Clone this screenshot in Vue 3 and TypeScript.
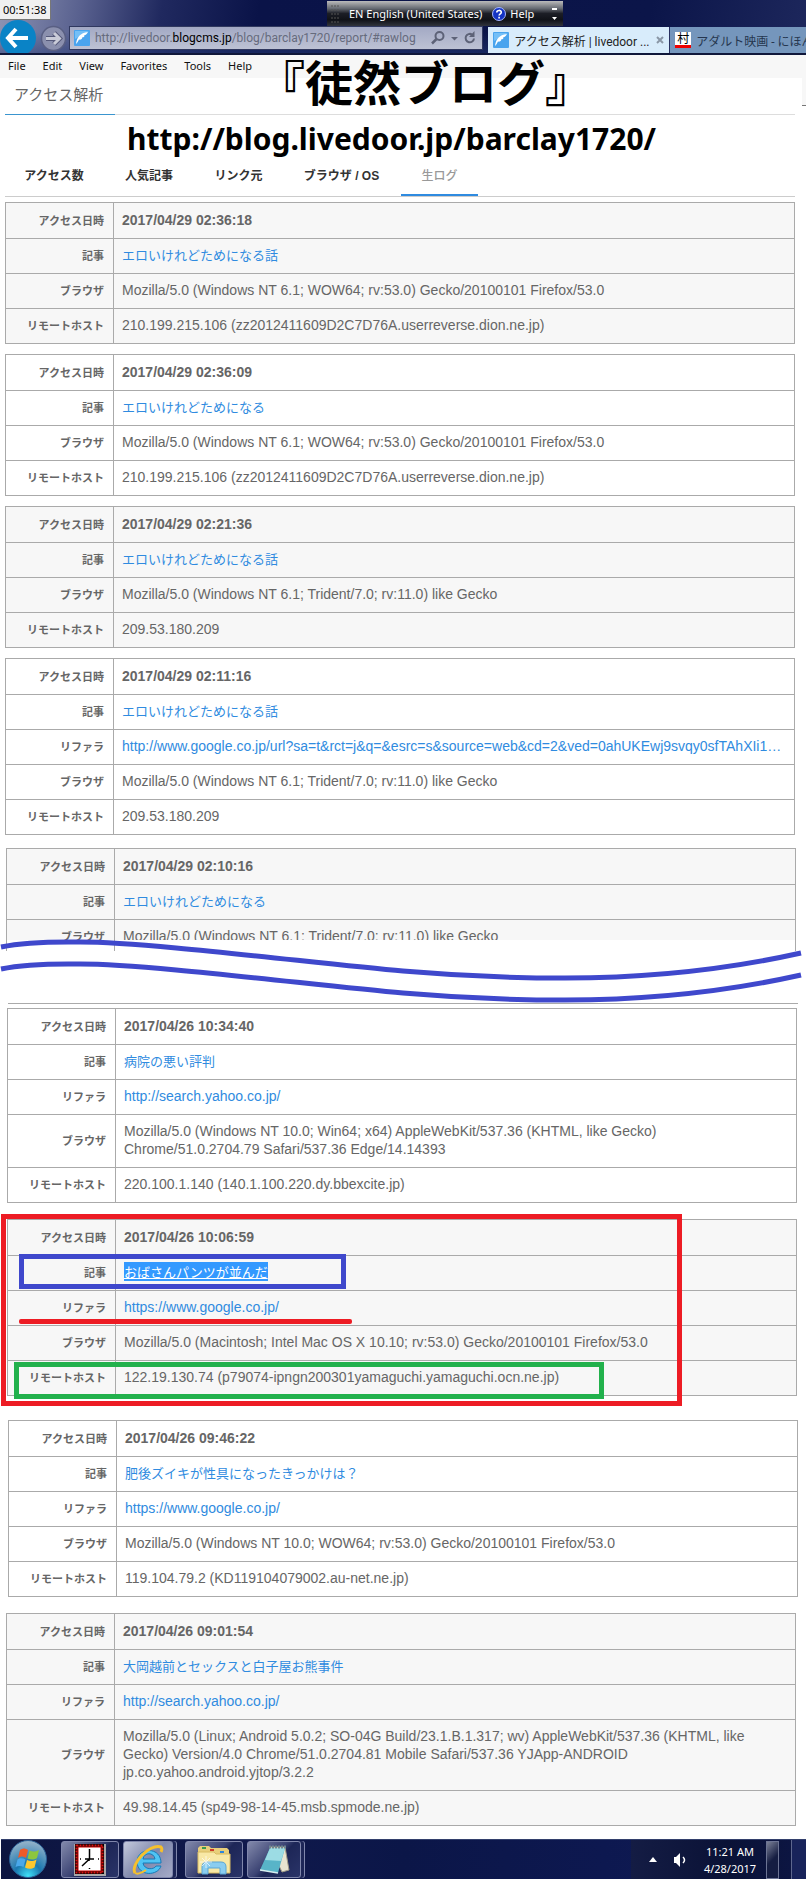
<script setup lang="ts">
interface Row {
  label: string
  value: string
  kind: 'date' | 'entry' | 'link' | 'text'
}
interface Entry {
  rows: Row[]
  shaded: boolean
}

function entry(shaded: boolean, date: string, title: string, referrer: string, browser: string, host: string): Entry {
  const rows: Row[] = [
    { label: 'アクセス日時', value: date, kind: 'date' },
    { label: '記事', value: title, kind: 'entry' },
  ]
  if (referrer) rows.push({ label: 'リファラ', value: referrer, kind: 'link' })
  rows.push({ label: 'ブラウザ', value: browser, kind: 'text' })
  if (host) rows.push({ label: 'リモートホスト', value: host, kind: 'text' })
  return { rows, shaded }
}

const firefox = 'Mozilla/5.0 (Windows NT 6.1; WOW64; rv:53.0) Gecko/20100101 Firefox/53.0'
const trident = 'Mozilla/5.0 (Windows NT 6.1; Trident/7.0; rv:11.0) like Gecko'

interface Block {
  place: string
  entry: Entry
}

const blocks: Block[] = [
  { place: 'p5', entry: entry(true, '2017/04/29 02:36:18', 'エロいけれどためになる話', '', firefox, '210.199.215.106 (zz2012411609D2C7D76A.userreverse.dion.ne.jp)') },
  { place: 'p5', entry: entry(false, '2017/04/29 02:36:09', 'エロいけれどためになる', '', firefox, '210.199.215.106 (zz2012411609D2C7D76A.userreverse.dion.ne.jp)') },
  { place: 'p5', entry: entry(true, '2017/04/29 02:21:36', 'エロいけれどためになる話', '', trident, '209.53.180.209') },
  { place: 'p5', entry: entry(false, '2017/04/29 02:11:16', 'エロいけれどためになる話', 'http://www.google.co.jp/url?sa=t&rct=j&q=&esrc=s&source=web&cd=2&ved=0ahUKEwj9svqy0sfTAhXIi1…', trident, '209.53.180.209') },
  { place: 'p6 torn', entry: entry(true, '2017/04/29 02:10:16', 'エロいけれどためになる', '', trident, '') },
  { place: 'p7', entry: entry(false, '2017/04/26 10:34:40', '病院の悪い評判', 'http://search.yahoo.co.jp/', 'Mozilla/5.0 (Windows NT 10.0; Win64; x64) AppleWebKit/537.36 (KHTML, like Gecko) Chrome/51.0.2704.79 Safari/537.36 Edge/14.14393', '220.100.1.140 (140.1.100.220.dy.bbexcite.jp)') },
  { place: 'p7 marked', entry: entry(true, '2017/04/26 10:06:59', 'おばさんパンツが並んだ', 'https://www.google.co.jp/', 'Mozilla/5.0 (Macintosh; Intel Mac OS X 10.10; rv:53.0) Gecko/20100101 Firefox/53.0', '122.19.130.74 (p79074-ipngn200301yamaguchi.yamaguchi.ocn.ne.jp)') },
  { place: 'p8', entry: entry(false, '2017/04/26 09:46:22', '肥後ズイキが性具になったきっかけは？', 'https://www.google.co.jp/', 'Mozilla/5.0 (Windows NT 10.0; WOW64; rv:53.0) Gecko/20100101 Firefox/53.0', '119.104.79.2 (KD119104079002.au-net.ne.jp)') },
  { place: 'p6 last', entry: entry(true, '2017/04/26 09:01:54', '大岡越前とセックスと白子屋お熊事件', 'http://search.yahoo.co.jp/', 'Mozilla/5.0 (Linux; Android 5.0.2; SO-04G Build/23.1.B.1.317; wv) AppleWebKit/537.36 (KHTML, like Gecko) Version/4.0 Chrome/51.0.2704.81 Mobile Safari/537.36 YJApp-ANDROID jp.co.yahoo.android.yjtop/3.2.2', '49.98.14.45 (sp49-98-14-45.msb.spmode.ne.jp)') },
]

const menu = ['File', 'Edit', 'View', 'Favorites', 'Tools', 'Help']
const tabs = ['アクセス数', '人気記事', 'リンク元', 'ブラウザ / OS', '生ログ']
</script>

<template>
  <div class="page">
    <header class="frame">
      <div class="timer">00:51:38</div>
      <div class="langbar">
        <svg class="grip" width="8" height="18" viewBox="0 0 8 18">
          <path d="M0 1H8M0 5H8M0 9H8M0 13H8M0 17H8" stroke="#555" stroke-dasharray="2 1" />
        </svg>
        <span>EN English (United States)</span>
        <button class="plain help" type="button">
          <svg width="14" height="14" viewBox="0 0 14 14">
            <circle cx="7" cy="7" r="6.5" fill="#1433c4" stroke="#a8b8ff" />
            <path d="M4.8 5.4C4.8 2.8 9.3 2.8 9.3 5.2C9.3 6.8 7.1 6.8 7.1 8.6M7.1 9.8V11.4" stroke="#fff" stroke-width="1.6" fill="none" />
          </svg>
          Help
        </button>
        <svg class="mini" width="6" height="14" viewBox="0 0 6 14">
          <path d="M0 1H5V3H0ZM0 10H5L2.500 13Z" fill="#fff" />
        </svg>
      </div>
      <nav class="bar">
        <button class="plain back" type="button" aria-label="Back">
          <svg width="36" height="33" viewBox="0 0 36 33">
            <circle cx="18" cy="18" r="18" fill="#0a83c6" />
            <path d="M16 9L8 18L16 27M9 18H28" stroke="#fff" stroke-width="4" fill="none" />
          </svg>
        </button>
        <button class="plain forward" type="button" aria-label="Forward">
          <svg width="27" height="27" viewBox="0 0 27 27">
            <circle cx="13.500" cy="13.500" r="12" fill="#8b90ae" stroke="#595f83" stroke-width="1.500" />
            <path d="M14 8L19.500 13.500L14 19M19 13.500H6" stroke="#55597a" stroke-width="5" fill="none" />
            <path d="M14 8L19.500 13.500L14 19M19 13.500H6" stroke="#c9cbd8" stroke-width="3" fill="none" />
          </svg>
        </button>
        <div class="address">
          <svg width="16" height="16" viewBox="0 0 16 16">
            <rect width="16" height="16" rx="1" fill="#4aa4ee" />
            <path d="M1 1H15L1 9Z" fill="#74bff7" />
            <path d="M2 14C3 7 6 3 14 2C13 4 12 5 10 5.500C11 6 10 7.500 8 7.500C9 9 6 10 5 9.500C4 11 3.500 13 2 14Z" fill="#fff" />
          </svg>
          <div class="url" role="textbox" contenteditable="true" aria-label="Address" spellcheck="false">http://livedoor.<b>blogcms.jp</b>/blog/barclay1720/report/#rawlog</div>
          <button class="plain tool" type="button" aria-label="Search">
            <svg width="28" height="14" viewBox="0 0 28 14">
              <circle cx="8.500" cy="5" r="4" fill="none" stroke="#5d6277" stroke-width="2" />
              <path d="M5.500 8L1 12.500" stroke="#5d6277" stroke-width="2.500" />
              <path d="M20 6H27L23.500 9.500Z" fill="#5d6277" />
            </svg>
          </button>
          <button class="plain tool" type="button" aria-label="Refresh">
            <svg width="12" height="14" viewBox="0 0 12 14">
              <path d="M8 3.500A4.200 4.200 0 1 0 10 7.500" fill="none" stroke="#5d6277" stroke-width="2" />
              <path d="M10.500 0V6H5Z" fill="#5d6277" />
            </svg>
          </button>
        </div>
        <div class="tab on">
          <svg width="16" height="16" viewBox="0 0 16 16">
            <rect width="16" height="16" rx="1" fill="#4aa4ee" />
            <path d="M1 1H15L1 9Z" fill="#74bff7" />
            <path d="M2 14C3 7 6 3 14 2C13 4 12 5 10 5.500C11 6 10 7.500 8 7.500C9 9 6 10 5 9.500C4 11 3.500 13 2 14Z" fill="#fff" />
          </svg>
          <span class="name">アクセス解析 | livedoor ...</span>
          <button class="plain close" type="button" aria-label="Close tab">
            <svg width="8" height="8" viewBox="0 0 8 8"><path d="M1 1L7 7M7 1L1 7" stroke="#8a97a6" stroke-width="2" /></svg>
          </button>
        </div>
        <div class="tab off">
          <span class="mura">村</span>
          <span class="name">アダルト映画 - にほん</span>
        </div>
      </nav>
    </header>

    <nav class="menu">
      <button v-for="m in menu" :key="m" class="plain" type="button">{{ m }}</button>
    </nav>
    <div class="corner"></div>
    <h1 class="banner">『徒然ブログ』</h1>

    <main>
      <h2 class="heading"><span>アクセス解析</span></h2>
      <p class="blog">http://blog.livedoor.jp/barclay1720/</p>
      <nav class="tabs">
        <a v-for="(t, i) in tabs" :key="t" href="#" :class="{ active: i === 4 }">{{ t }}</a>
      </nav>

      <section v-for="(b, i) in blocks" :key="i" class="block" :class="b.place">
        <div class="clip">
          <table :class="{ shaded: b.entry.shaded }">
            <tbody>
              <tr v-for="r in b.entry.rows" :key="r.label">
                <th scope="row">{{ r.label }}</th>
                <td :class="r.kind">
                  <a v-if="r.kind === 'entry' || r.kind === 'link'" href="#">{{ r.value }}</a>
                  <template v-else>{{ r.value }}</template>
                </td>
              </tr>
            </tbody>
          </table>
        </div>
        <template v-if="i === 4">
          <div class="stub"><i></i></div>
          <svg class="waves" viewBox="0 0 806 60" preserveAspectRatio="none">
            <g fill="none" stroke="#3f48cc" stroke-width="5">
              <path d="M1 9C30 3 60 4 80 4C150 4 320 26 403 33C460 38 510 40 565 40C640 40 720 33 801 15" />
              <path d="M1 31C30 25 60 26 80 26C150 26 320 48 403 55C460 60 510 62 565 62C640 62 720 55 801 37" />
            </g>
          </svg>
          <hr />
        </template>
        <template v-if="i === 6">
          <div class="mark outer"></div>
          <div class="mark title"></div>
          <div class="mark line"></div>
          <div class="mark host"></div>
        </template>
      </section>
    </main>

    <footer class="taskbar">
      <button class="plain orb" type="button" aria-label="Start">
        <svg width="40" height="40" viewBox="0 0 40 40">
          <defs>
            <radialGradient id="orb" cx=".5" cy=".95" r=".9">
              <stop offset="0" stop-color="#3fe0f8" />
              <stop offset=".4" stop-color="#1a78b0" />
              <stop offset="1" stop-color="#8fb0c8" />
            </radialGradient>
          </defs>
          <circle cx="20" cy="20" r="18.500" fill="url(#orb)" stroke="#2a5f96" />
          <path d="M12 11C15 9 17 9 20 11L18 19C15 17 13 17 10 19Z" fill="#ef5a28" />
          <path d="M21.500 11.500C25 13 27 13 31 11L29 19C26 21 23 21 19.500 19.500Z" fill="#8cc63e" />
          <path d="M9.500 20.500C12 18.500 15 19 17.500 20.500L15.500 28C13 26.500 10 26.500 7.500 28Z" fill="#4aa8ea" />
          <path d="M19 21C22 22.500 25 22.500 28.500 20.500L26.500 28.500C23 30.500 20 30 17 28.500Z" fill="#fdc72e" />
        </svg>
      </button>
      <button class="task wide" type="button" aria-label="Clock">
        <svg width="32" height="32" viewBox="0 0 32 32">
          <rect width="32" height="32" fill="#a8a8a8" />
          <rect x="1" y="0" width="29" height="30" fill="#000" />
          <rect x="2.500" y="1.500" width="26" height="27" fill="none" stroke="#e01010" stroke-width="2" stroke-dasharray="2 1" />
          <rect x="4" y="3" width="23" height="24" fill="#fff" stroke="#c00" />
          <path d="M15.500 5V15L8 22M11 15H20M15 15V17M15.500 24V25M6 15H7M24 15H25" stroke="#000" stroke-width="1.500" fill="none" />
        </svg>
      </button>
      <button class="task lit stack" type="button" aria-label="Internet Explorer">
        <svg width="32" height="32" viewBox="0 0 32 32">
          <path d="M29 19H11C12 26 22 26 24 22H29C26 32 6 33 5 18C5 3 29 2 29 19ZM11 15H23C22 8 12 8 11 15Z" fill="#4fc3f3" stroke="#167ab8" />
          <path d="M3 29C-2 21 17 -1 29 3C30 4 30 6 29 8" fill="none" stroke="#f6c02c" stroke-width="3" />
          <path d="M3 29C6 31 11 28 14 26" fill="none" stroke="#f6c02c" stroke-width="2" />
        </svg>
      </button>
      <button class="task wide" type="button" aria-label="Explorer">
        <svg width="34" height="32" viewBox="0 0 34 32">
          <path d="M1 4L3 2H12L14 4H30L32 6V29H1Z" fill="#e8cf7c" />
          <path d="M1 8H17L19 10H33V29H1Z" fill="#f8e8a6" stroke="#d8bb62" />
          <path d="M5 3H9V5H5Z" fill="#3a9a4e" />
          <path d="M13 5H17V7H13Z" fill="#d03c28" />
          <path d="M23 7H27V9H23Z" fill="#2d86dc" />
          <path d="M5 30V23Q5 18 10 18H24Q29 18 29 23V30H23V24H11V30Z" fill="#8acdf0" stroke="#5aa5d4" />
          <path d="M9 12V24M3 18H15M5 14L13 22M13 14L5 22" stroke="#fff" opacity=".7" />
        </svg>
      </button>
      <button class="task stack narrow" type="button" aria-label="Notepad">
        <svg width="32" height="32" viewBox="0 0 32 32">
          <path d="M12 3H27L31 26L24 28Z" fill="#e8e4d0" stroke="#a09c88" />
          <path d="M12 4H27L20 29L2 26Z" fill="#58b4c8" />
          <path d="M12 4H27L23 17L7 16Z" fill="#9cdce4" />
          <path d="M11 3H28" stroke="#6d8590" stroke-width="3" stroke-dasharray="2 1" />
          <path d="M2 26L20 29" stroke="#d6eef0" stroke-width="1.500" />
        </svg>
      </button>
      <div class="tray">
        <svg width="8" height="5" viewBox="0 0 8 5"><path d="M0 5L4 0L8 5Z" fill="#fff" /></svg>
        <svg width="14" height="16" viewBox="0 0 14 16">
          <path d="M1 5H3L7 1V15L3 11H1Z" fill="#fff" />
          <path d="M10 5Q13 8 10 11" fill="none" stroke="#fff" stroke-width="1.500" />
        </svg>
        <div class="clock">11:21 AM<br />4/28/2017</div>
        <button class="plain desk" type="button" aria-label="Show desktop"></button>
      </div>
    </footer>
  </div>
</template>

<style>
body {
  margin: 0;
  background: #fff;
}
</style>

<style scoped>
.page {
  position: relative;
  overflow: hidden;
  font-family: "Liberation Sans", "Noto Sans CJK JP", sans-serif;
  color: #666;
}
.page * {
  box-sizing: border-box;
}
.plain {
  border: 0;
  padding: 0;
  margin: 0;
  background: none;
  font: inherit;
  color: inherit;
}
svg {
  display: block;
  flex: none;
}
.frame {
  position: relative;
  height: 55px;
  padding-top: 20px;
  background: linear-gradient(180deg, transparent 60%, rgba(40, 60, 120, 0.5)), linear-gradient(100deg, #8d94b4 0, #59618f 10%, #20295f 20%, #0a1348 32%, #0b1549 80%, #1d275c 100%);
  border-bottom: 2px solid #10173a;
  font-family: "Noto Sans", "Noto Sans CJK JP", sans-serif;
  overflow: hidden;
}
.timer {
  position: absolute;
  left: 0;
  top: 0;
  width: 51px;
  height: 20px;
  background: #f0f0f0;
  border: solid #777;
  border-width: 0 1px 1px 0;
  color: #000;
  font-size: 11px;
  line-height: 19px;
  padding-left: 3px;
}
.langbar {
  position: absolute;
  left: 327px;
  top: 1px;
  width: 236px;
  height: 25px;
  display: flex;
  align-items: center;
  padding: 0 5px 0 4px;
  gap: 10px;
  background: linear-gradient(180deg, #bbb 0, #666a72 30%, #1c1e26 50%, #101218 75%, #30333c);
  color: #fff;
  font-size: 11px;
  white-space: nowrap;
}
.help {
  display: flex;
  align-items: center;
  gap: 4px;
}
.mini {
  margin-left: auto;
}
.bar {
  display: flex;
  align-items: flex-start;
  height: 33px;
}
.back {
  width: 36px;
}
.forward {
  margin: 5px 2px 0 4px;
}
.address {
  flex: 400 1 0;
  min-width: 0;
  margin-top: 6px;
  height: 24px;
  display: flex;
  align-items: center;
  padding: 0 6px 0 4px;
  border: 1px solid #30385f;
  background: linear-gradient(180deg, #a3a9c4, #bdc2d4);
  color: #666b7d;
}
.url {
  flex: 1;
  min-width: 0;
  margin-left: 5px;
  overflow: hidden;
  white-space: nowrap;
  font: 400 12px/20px Roboto, sans-serif;
}
.url b {
  font-weight: 400;
  color: #000;
}
.tool + .tool {
  margin-left: 5px;
}
.tab {
  display: flex;
  align-items: center;
  gap: 5px;
  height: 26px;
  margin-top: 7px;
  padding: 0 5px;
  font-family: Roboto, "Noto Sans CJK JP", sans-serif;
  font-size: 12px;
  white-space: nowrap;
  overflow: hidden;
}
.on {
  flex: 170 1 0;
  margin-left: 5px;
  background: #d8ecfb;
  color: #222;
}
.close {
  margin-left: auto;
}
.off {
  flex: 130 1 0;
  padding-right: 0;
  border-left: 1px solid #283060;
  background: #7596bc;
  color: #26364f;
}
.mura {
  width: 16px;
  height: 16px;
  flex: none;
  background: linear-gradient(#fff 13px, #e00 13px);
  color: #000;
  font-size: 12px;
  line-height: 14px;
  text-align: center;
}
.menu {
  display: flex;
  gap: 17px;
  height: 23px;
  padding: 0 8px;
  background: #f7f7f7;
  color: #111;
  font-family: "Noto Sans", sans-serif;
  font-size: 11px;
  line-height: 22px;
}
.menu button {
  height: 21px;
}
.corner {
  position: absolute;
  right: 0;
  top: 78px;
  width: 4px;
  height: 28px;
  background: #f7f7f7;
  border-bottom: 1px solid #777;
}
.banner {
  position: absolute;
  left: 257px;
  top: 50px;
  margin: 0;
  color: #000;
  font: 700 48px/60px "Noto Sans CJK JP", sans-serif;
  white-space: nowrap;
}
.heading {
  display: flex;
  margin: 0 11px 0 5px;
  font: 400 15px/36px "Noto Sans CJK JP", sans-serif;
  box-shadow: inset 0 -1px #ddd;
}
.heading span {
  width: 110px;
  height: 37px;
  padding-left: 9px;
  line-height: 31px;
  border-bottom: 1px solid #3a95cf;
}
.blog {
  margin: 0;
  padding: 4px 0 0 127px;
  height: 41px;
  color: #000;
  font: 700 30px/40px "Noto Sans", sans-serif;
  white-space: nowrap;
}
.tabs {
  display: grid;
  grid-template-columns: 98px 92px 87px 119px 77px;
  height: 41px;
  margin: 0 11px 5px 5px;
  border-bottom: 1px solid #ccc;
  text-align: center;
  font: 700 12px/40px "Liberation Sans", "Noto Sans CJK JP", sans-serif;
}
.tabs a {
  height: 40px;
  color: #333;
  text-decoration: none;
}
.tabs .active {
  color: #999;
  border-bottom: 2px solid #2f8be0;
  font-weight: 500;
}
.block {
  position: relative;
  margin-bottom: 10px;
}
.clip {
  overflow: hidden;
}
.p5 {
  padding: 0 11px 0 5px;
}
.p6 {
  padding: 0 10px 0 6px;
}
.p7 {
  padding: 0 9px 0 7px;
  margin-bottom: 16px;
}
.p8 {
  padding: 0 8px;
  margin-bottom: 16px;
}
.marked {
  margin-bottom: 24px;
}
.last {
  margin-bottom: 13px;
}
.torn {
  margin: 13px 0 4px;
}
.torn .clip {
  height: 92px;
}
table {
  width: 100%;
  border-collapse: collapse;
  table-layout: fixed;
  font-size: 14px;
  line-height: 18px;
}
.shaded {
  background: #f7f7f7;
}
th,
td {
  border: 1px solid #aaa;
  padding: 7px 9px 9px 8px;
}
tr:first-child > * {
  padding-top: 8px;
}
th {
  width: 108px;
  text-align: right;
  font: 700 11px/18px "Noto Sans CJK JP", sans-serif;
}
td {
  text-align: left;
  overflow: hidden;
}
.date {
  font-weight: 700;
}
.entry {
  font: 400 13px/18px "Noto Sans CJK JP", sans-serif;
}
.link {
  white-space: nowrap;
}
td a {
  color: #2f8be0;
  text-decoration: none;
}
.marked .entry a {
  background: #3399ff;
  color: #fff;
  text-decoration: underline;
}
.stub {
  height: 11px;
  border: solid #aaa;
  border-width: 0 1px;
}
.stub i {
  display: block;
  width: 108px;
  height: 11px;
  border-right: 1px solid #aaa;
}
.waves {
  position: absolute;
  left: 0;
  top: 90px;
  width: 100%;
  height: 60px;
  overflow: visible;
}
hr {
  height: 1px;
  margin: 52px -2px 0 2px;
  border: 0;
  background: #aaa;
}
.mark {
  position: absolute;
  border: 5px solid #ed1c24;
}
.outer {
  left: 1px;
  top: -5px;
  width: 681px;
  height: 192px;
}
.title {
  left: 19px;
  top: 35px;
  width: 327px;
  height: 35px;
  border-color: #3f48cc;
}
.line {
  left: 19px;
  top: 100px;
  width: 333px;
  height: 5px;
  border: 0;
  border-radius: 2px;
  background: #ed1c24;
}
.host {
  left: 14px;
  top: 143px;
  width: 590px;
  height: 37px;
  border-color: #22b14c;
}
.taskbar {
  display: flex;
  gap: 4px;
  height: 40px;
  margin-left: 1px;
  padding: 1px 0 1px 7px;
  border-top: 1px solid #33406c;
  background: linear-gradient(90deg, #0d1540, #10194c 30%, #0b1648 50%, #0d1850 75%, #111c55);
}
.orb {
  width: 49px;
  margin-top: -2px;
}
.task {
  display: flex;
  align-items: center;
  justify-content: center;
  padding: 0;
  border: 1px solid #8087ac;
  border-radius: 3px;
  background: linear-gradient(135deg, #8289ab 0, #3c4474 45%, #1d2657 55%, #2a3468);
}
.wide {
  width: 58px;
}
.lit {
  width: 50px;
  background: linear-gradient(135deg, #c3c9dc, #8088ac 50%, #a5abc8);
}
.narrow {
  width: 54px;
}
.stack {
  box-shadow: 3px 0 #1d2657, 4px 0 #8087ac;
  margin-right: 8px;
}
.narrow.stack {
  margin-right: 0;
}
.tray {
  display: flex;
  align-items: center;
  margin: -1px 0 -1px auto;
  padding: 0 13px 0 18px;
  background: linear-gradient(90deg, #141c44, #0a1236 60%, #0c1542);
  border-right: 14px solid #18235a;
  box-shadow: inset -1px 0 #5e678e;
}
.tray svg + svg {
  margin-left: 16px;
}
.clock {
  width: 54px;
  margin-left: 16px;
  color: #fff;
  text-align: center;
  font: 400 11px/17px "Noto Sans", sans-serif;
  white-space: nowrap;
}
.desk {
  width: 13px;
  height: 38px;
  margin-left: 9px;
  border: 1px solid #6c7494;
  background: linear-gradient(135deg, #7a8096, #151d42 50%);
}
</style>
